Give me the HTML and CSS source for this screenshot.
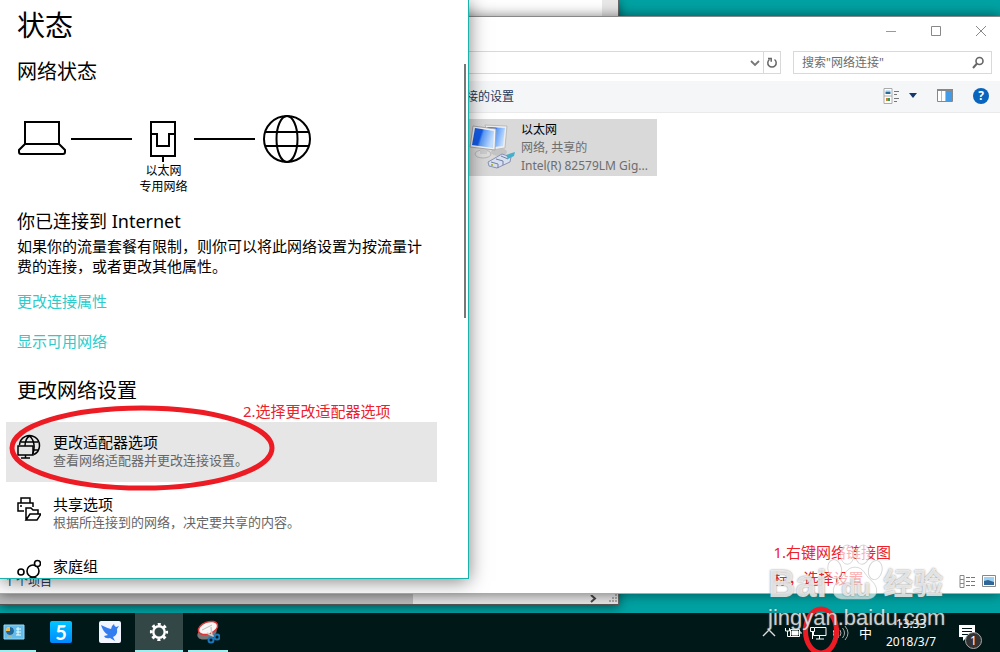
FILE: index.html
```html
<!DOCTYPE html>
<html lang="zh-CN">
<head>
<meta charset="utf-8">
<title>网络状态</title>
<meta name="viewport" content="width=device-width, initial-scale=1">
<link rel="stylesheet" href="styles.css">
</head>
<body>
<div class="desktop">
  <main class="workspace">
    <section class="window back-window" aria-label="后台窗口">
      <div class="back-body"><div class="back-track"></div></div>
      <div class="back-scroll">
        <div class="back-thumb"></div>
        <svg class="back-arrow" width="8" height="8" viewBox="0 0 8 8"><path d="M2 0l4 3.500-4 3.500" fill="none" stroke="#444" stroke-width="2"/></svg>
        <svg width="10" height="10" viewBox="0 0 10 10" fill="#aaa"><path d="M7 0h2v2H7zM4 3h2v2H4zM7 3h2v2H7zM1 6h2v2H1zM4 6h2v2H4zM7 6h2v2H7z"/></svg>
      </div>
    </section>

    <section class="window explorer" aria-label="网络连接">
      <header class="titlebar">
        <button class="plain" aria-label="最小化"><svg width="12" height="12" viewBox="0 0 12 12"><path d="M1 6.500h10" stroke="#999"/></svg></button>
        <button class="plain" aria-label="最大化"><svg width="12" height="12" viewBox="0 0 12 12"><path d="M1.500 1.500h9v9h-9z" stroke="#888" fill="none"/></svg></button>
        <button class="plain" aria-label="关闭"><svg width="12" height="12" viewBox="0 0 12 12"><path d="M1 1l10 10M11 1L1 11" stroke="#888"/></svg></button>
      </header>
      <div class="address-row">
        <div class="address">
          <button class="plain address-drop" aria-label="历史记录"><svg width="10" height="8" viewBox="0 0 10 8"><path d="M1 2l4 4 4-4" fill="none" stroke="#777" stroke-width="1.800"/></svg></button>
          <button class="plain address-refresh" aria-label="刷新"><svg width="12" height="12" viewBox="0 0 12 12"><path d="M8.500 2.500a4.200 4.200 0 1 1-5 0M2 1.500h3.200v3.200" fill="none" stroke="#666" stroke-width="1.500"/></svg></button>
        </div>
        <label class="search">
          <input type="search" placeholder='搜索"网络连接"' aria-label="搜索网络连接">
          <svg width="14" height="14" viewBox="0 0 14 14" fill="none" stroke="#666"><circle cx="8.500" cy="5" r="3.500" stroke-width="1.600"/><path d="M6 7.500L2 12" stroke-width="2"/></svg>
        </label>
      </div>
      <div class="toolbar">
        <span>接的设置</span>
        <div class="toolbar-actions">
          <button class="plain view-btn" aria-label="更改视图">
            <svg width="18" height="16" viewBox="0 0 18 16"><path d="M1 .500h8v15H1zM1 8h8" fill="#fff" stroke="#aaa"/><path d="M2.500 2.500h5v1.500h-5z" fill="#8cc4ee"/><path d="M2.500 4h5v2h-5z" fill="#246c9c"/><path d="M3 10h2v3H3z" fill="#d77b35"/><path d="M5 10h2v3H5z" fill="#3d9a50"/><path d="M11 3.500h5M11 6.500h3M11 10.500h5M11 13.500h3" stroke="#777"/></svg>
            <svg width="8" height="5" viewBox="0 0 8 5"><path d="M0 0h8L4 5z" fill="#16376b"/></svg>
          </button>
          <button class="plain" aria-label="预览窗格"><svg width="16" height="13" viewBox="0 0 16 13"><path d="M.500 .500h15v12H.500z" fill="#fff" stroke="#888"/><path d="M0 0h16v2H0z" fill="#888"/><path d="M9 2h6v10H9z" fill="#439be5"/><path d="M4.500 2v10M8.500 2v10" stroke="#bbb"/></svg></button>
          <button class="plain help" aria-label="帮助">?</button>
        </div>
      </div>
      <div class="files">
        <button class="adapter">
          <svg width="48" height="48" viewBox="0 0 48 48">
            <defs><linearGradient id="screen" x1="0" y1="0" x2="1" y2=".3"><stop offset="0" stop-color="#1c63ea"/><stop offset=".45" stop-color="#1259e8"/><stop offset=".55" stop-color="#5d9cf7"/><stop offset="1" stop-color="#c0dcff"/></linearGradient></defs>
            <ellipse cx="31" cy="28" rx="8" ry="4" fill="#c4c4c4"/>
            <path d="M17 1l22 1-2 22-13 2z" fill="#eee" stroke="#bbb"/><path d="M19 3l18 1-2 18-9 1z" fill="url(#screen)"/>
            <ellipse cx="15" cy="30" rx="8" ry="4" fill="#ddd" stroke="#b5b5b5"/><path d="M12 23h7v7h-7z" fill="#ccc"/>
            <path d="M5 2l23 3-1 21L2 23z" fill="#f3f3f3" stroke="#aaa"/><path d="M7 4l19 3-1 17L4 21z" fill="url(#screen)"/>
            <path d="M20 38l14-8 9 3-1 5-13 6-8-2z" fill="#d8dfef" stroke="#8793b2"/><path d="M38 31l9-3-1 4-6 3z" fill="#46aecb"/><path d="M23 38l7 2v4M28 35l7 2v4M33 32l7 3" fill="none" stroke="#707fa6"/><path d="M23 40h2v2h-2z" fill="#b4b938"/>
          </svg>
          <span class="adapter-text"><b>以太网</b><span>网络, 共享的</span><span>Intel(R) 82579LM Gig...</span></span>
        </button>
      </div>
      <footer class="statusbar">
        <span>1 个项目</span>
        <div class="status-views">
          <svg width="17" height="13" viewBox="0 0 17 13"><path d="M1 .500h4v12H1zM1 4.500h4M1 8.500h4" fill="none" stroke="#888"/><path d="M7 2.500h4M12 2.500h4M7 6.500h4M12 6.500h4M7 10.500h4M12 10.500h4" stroke="#777"/></svg>
          <svg width="14" height="12" viewBox="0 0 14 12"><path d="M.500 .500h13v11H.500z" fill="#fff" stroke="#888"/><path d="M2 2h10v8H2z" fill="#9dd0f3"/><path d="M2 6l4-1 6 2v3H2z" fill="#2e6697"/></svg>
        </div>
      </footer>
    </section>

    <section class="window settings" aria-label="网络设置">
      <h1>状态</h1>
      <h2>网络状态</h2>
      <div class="diagram">
        <svg width="48" height="48" viewBox="0 0 48 48" fill="none" stroke="#000" stroke-width="2"><path d="M7 7h34v22H7zM7 29l-6 6v2q0 2 2 2h42q2 0 2-2v-2l-6-6"/></svg>
        <div class="wire"></div>
        <div class="node">
          <svg width="28" height="48" viewBox="0 0 28 48" fill="none" stroke="#000" stroke-width="2"><path d="M1 7h24v34H1zM1 19h6v12h12V19h6M13 41v6"/></svg>
          <span>以太网</span><span>专用网络</span>
        </div>
        <div class="wire"></div>
        <svg width="48" height="48" viewBox="0 0 48 48" fill="none" stroke="#000" stroke-width="2"><circle cx="24" cy="24" r="23"/><ellipse cx="24" cy="24" rx="10.500" ry="23"/><path d="M2 17h44M2 31h44"/></svg>
      </div>
      <h3>你已连接到 Internet</h3>
      <p class="intro">如果你的流量套餐有限制，则你可以将此网络设置为按流量计<br>费的连接，或者更改其他属性。</p>
      <a href="#properties">更改连接属性</a>
      <a href="#networks">显示可用网络</a>
      <h2 class="change-title">更改网络设置</h2>
      <nav class="options">
        <button class="option active">
          <svg width="24" height="26" viewBox="0 0 24 26" fill="none" stroke="#000" stroke-width="1.500"><path d="M2.500 11A10 10 0 1 1 17 20.500M12.500 2C8.500 4.500 8 8 8 12M12.500 2C18 6.500 18 15 15.500 20.500M4 8h17M16 16h5"/><path d="M1 12h15v9H1zM8.500 21v3M4 24h9"/></svg>
          <span><b>更改适配器选项</b><small>查看网络适配器并更改连接设置。</small></span>
        </button>
        <button class="option">
          <svg width="24" height="26" viewBox="0 0 24 26" fill="none" stroke="#000" stroke-width="1.500"><path d="M4 7V2h9v5M7 15H1V7h15v4M9 24V12h5l2 2h5v4M9 24l4-6h11l-4 6zM3 10h2"/></svg>
          <span><b>共享选项</b><small>根据所连接到的网络，决定要共享的内容。</small></span>
        </button>
        <button class="option">
          <svg width="24" height="26" viewBox="0 0 24 26" fill="none" stroke="#000" stroke-width="1.600"><circle cx="4" cy="14" r="3"/><circle cx="16" cy="13" r="6"/><circle cx="20.500" cy="5.500" r="3" fill="#fff"/><path d="M10 22q6-5 12 0"/></svg>
          <span><b>家庭组</b></span>
        </button>
      </nav>
      <div class="scroll-thumb"></div>
    </section>
  </main>

  <footer class="taskbar">
    <div class="apps">
      <button class="plain app first running" aria-label="控制面板"><svg width="22" height="18" viewBox="0 0 22 18"><path d="M1 2h20v14H1z" fill="#63bce9" stroke="#91dcfb"/><circle cx="7" cy="8" r="4" fill="#fff"/><path d="M7 8V4a4 4 0 1 1-4 4z" fill="#21699d"/><path d="M7 4v4H3a4 4 0 0 1 4-4z" fill="#f7b93e"/><path d="M13 6h5M13 9h5M13 12h5M15 4v8" stroke="#eaffff"/><path d="M4 14h5" stroke="#e5b34c"/></svg></button>
      <button class="plain app" aria-label="5"><span class="five">5</span></button>
      <button class="plain app" aria-label="飞鸟"><svg width="22" height="22" viewBox="0 0 22 22"><rect width="22" height="22" rx="2" fill="#f0f5ff"/><path d="M2 4q6 3 10 4 0-3 3-5 0 2 2 3l3-1-2 3q1 6-4 8l2 4-5-3q-5 1-6-2l4-1Q4 11 2 4z" fill="#347df0"/></svg></button>
      <button class="plain app selected running" aria-label="设置"><svg width="20" height="20" viewBox="0 0 20 20" fill="none" stroke="#fff"><circle cx="10" cy="10" r="5.700" stroke-width="2.400"/><circle cx="10" cy="10" r="7.800" stroke-width="2.600" stroke-dasharray="3.060 3.066" stroke-dashoffset="1.500"/></svg></button>
      <button class="plain app snip running" aria-label="截图工具"><svg width="24" height="24" viewBox="0 0 24 24"><ellipse cx="11" cy="13" rx="10" ry="6" fill="#777" transform="rotate(-20 11 13)"/><ellipse cx="12" cy="8" rx="10" ry="6" fill="#f7f7f7" stroke="#dc3639" stroke-width="1.500" transform="rotate(-20 12 8)"/><path d="M6 10l10-5" stroke="#bbb"/><path d="M15 7l1 9M11 13l8 4" stroke="#ccc" stroke-width="1.500"/><g fill="none" stroke="#1c78bb" stroke-width="2"><circle cx="15" cy="20" r="2.500"/><circle cx="21" cy="17" r="2.500"/></g></svg></button>
    </div>
    <div class="tray">
      <svg width="14" height="14" viewBox="0 0 14 14"><path d="M1 10l6-6 6 6" fill="none" stroke="#ddd" stroke-width="1.400"/></svg>
      <svg class="battery" width="18" height="14" viewBox="0 0 18 14" fill="none" stroke="#fff"><path d="M6.500 3.500h9v7h-9zM1.500 2v3h4V2M3.500 5v5.500h3M16 6h1v2"/><path d="M8 5h6v4H8z" fill="#fff"/></svg>
      <svg class="lan" width="18" height="16" viewBox="0 0 18 16" fill="none" stroke="#fff"><path d="M6 2.500h11v8H4.500V7M10.500 11v3M7 14h8M1.500 2.500h4v4h-4zM3.500 7v7"/></svg>
      <svg class="volume" width="16" height="16" viewBox="0 0 16 16" fill="none" stroke="#aaa"><path d="M0 6h2l3-3v10L2 10H0z" stroke="#fff"/><path d="M7 5q2 3 0 6M9.500 3q4 5 0 10M12 1q6 7 0 14"/></svg>
      <span class="ime">中</span>
      <div class="clock"><time>13:33</time><time>2018/3/7</time></div>
      <button class="plain notice" aria-label="1 条通知"><svg width="18" height="18" viewBox="0 0 18 18"><path d="M1 1h16v12h-8l-4 4v-4H1z" fill="#fff"/><path d="M4 4.500h10M4 7.500h10M4 10.500h7" stroke="#001817"/></svg><span class="badge">1</span></button>
    </div>
  </footer>

  <svg class="ring ring-option" width="270" height="90" viewBox="0 0 270 90"><ellipse cx="135" cy="45" rx="130" ry="40" fill="none" stroke="#ed1c24" stroke-width="5"/></svg>
  <svg class="ring ring-tray" width="38" height="46" viewBox="0 0 38 46"><ellipse cx="19" cy="25" rx="15.500" ry="22" fill="none" stroke="#ed1c24" stroke-width="5"/></svg>
  <p class="note note-option">2.选择更改适配器选项</p>
  <p class="note note-tray">1.右键网络链接图<br>标，选择设置</p>
  <div class="watermark">
    <div class="brand"><span>Bai</span><span class="paw"><svg width="56" height="60" viewBox="0 0 58 60" fill="#fff" fill-opacity=".65" stroke="#bbb" stroke-opacity=".6"><ellipse cx="21" cy="12" rx="7" ry="10"/><ellipse cx="37" cy="12" rx="7" ry="10" transform="rotate(10 37 12)"/><ellipse cx="8" cy="27" rx="7" ry="10" transform="rotate(-12 8 27)"/><ellipse cx="50" cy="28" rx="7" ry="10" transform="rotate(12 50 28)"/><path d="M29 25c9 0 10 8 16 13 10 8 8 20-4 20H17C5 58 3 46 13 38c6-5 7-13 16-13z"/></svg><span class="du">du</span></span><span class="jingyan">经验</span></div>
    <div class="domain">jingyan.baidu.com</div>
  </div>
</div>
</body>
</html>
```

FILE: styles.css
```css
* { box-sizing: border-box; }
body { margin: 0; font-family: "Noto Sans", "Noto Sans CJK SC", sans-serif; font-size: 12px; color: #000; }
h1, h2, h3, p { margin: 0; font-weight: 400; }
button { font: inherit; color: inherit; border: 0; padding: 0; text-align: left; }
svg { display: block; flex: none; }
.plain { background: none; display: flex; align-items: center; justify-content: center; }

.desktop { position: relative; height: 100vh; display: flex; flex-direction: column; overflow: hidden; background: #00a2a3; }
.workspace { position: relative; flex: 1; overflow: hidden; }
.window { position: absolute; display: flex; flex-direction: column; }

.back-window { top: 0; left: 0; width: 619px; bottom: 8px; background: #f5f5f5; border-right: 1px solid #666; border-bottom: 1px solid #555; box-shadow: 0 2px 10px rgba(0,0,0,.5); }
.back-body { flex: 1; display: flex; justify-content: flex-end; background: #fff; }
.back-track { width: 16px; background: #e8e8e8; }
.back-scroll { height: 11px; display: flex; align-items: center; gap: 11px; background: #e4e4e4; }
.back-thumb { width: 413px; height: 100%; background: #bbb; }
.back-arrow { margin-left: auto; }

.explorer { top: 16px; left: 0; right: 0; bottom: 19px; background: #fff; border-top: 1px solid #888; border-bottom: 1px solid #aaa; box-shadow: 0 0 12px rgba(0,0,0,.5); }
.titlebar { height: 34px; display: flex; justify-content: flex-end; align-items: center; gap: 33px; padding: 0 13px 6px 0; }
.address-row { display: flex; gap: 12px; padding-right: 8px; height: 23px; }
.address { flex: 1; display: flex; justify-content: flex-end; border: 1px solid #d9d9d9; }
.address-drop, .address-refresh { width: 17px; }
.address-refresh { border-left: 1px solid #d9d9d9; }
.search { width: 199px; display: flex; align-items: center; padding: 0 6px 0 8px; border: 1px solid #d9d9d9; }
.search input { flex: 1; min-width: 0; border: 0; outline: 0; padding: 0; background: none; font: inherit; }
.search input::placeholder { color: #6d6d6d; opacity: 1; }
.toolbar { height: 32px; margin-top: 7px; padding: 0 11px 2px 466px; display: flex; justify-content: space-between; align-items: center; background: #f4f6f8; border-bottom: 1px solid #eaeaea; color: #1e395b; }
.toolbar-actions { display: flex; align-items: center; gap: 20px; }
.view-btn { gap: 8px; }
.help { width: 16px; height: 16px; border-radius: 50%; background: #0864bd; color: #fff; font-weight: 700; }
.files { flex: 1; padding: 6px 0 0 464px; }
.adapter { width: 193px; height: 57px; padding: 0 4px; display: flex; align-items: center; gap: 5px; background: #d9d9d9; }
.adapter-text { display: flex; flex-direction: column; line-height: 18px; color: #6d6d6d; white-space: nowrap; }
.adapter-text b { font-weight: 400; color: #000; }
.statusbar { height: 24px; padding: 0 4px 0 6px; display: flex; align-items: center; justify-content: space-between; color: #1e395b; }
.status-views { display: flex; align-items: center; gap: 6px; }

.settings { top: 0; left: 0; width: 469px; bottom: 34px; padding: 5px 31px 0 6px; overflow: hidden; background: #fff; border-right: 1px solid #19b2ac; border-bottom: 1px solid #19b2ac; box-shadow: 0 2px 18px rgba(0,0,0,.5); }
.settings > h1, .settings > h2, .settings > h3, .settings > p, .settings > a { flex: none; margin-left: 11px; }
.settings h1 { font-size: 28px; line-height: 40px; }
.settings h2 { font-size: 20px; line-height: 30px; margin-top: 12px; }
.diagram { flex: none; display: flex; align-items: flex-start; margin: 28px 0 0 12px; height: 93px; }
.wire { width: 61px; height: 2px; margin: 23px 6px 0 5px; background: #000; }
.node { width: 51px; display: flex; flex-direction: column; align-items: center; white-space: nowrap; line-height: 16px; padding-top: 1px; margin-top: -1px; }
.node + .wire { margin-right: 8px; }
.settings h3 { font-size: 18px; line-height: 26px; }
.intro { font-size: 15px; line-height: 20px; margin-top: 2px; white-space: nowrap; }
.settings a { font-size: 15px; line-height: 20px; margin-top: 15px; color: #2dcbcb; text-decoration: none; }
.settings a + a { margin-top: 20px; }
.settings .change-title { margin-top: 25px; }
.options { display: flex; flex-direction: column; gap: 2px; margin-top: 16px; }
.option { flex: none; height: 60px; display: flex; align-items: flex-start; gap: 12px; padding: 12px 11px; background: none; }
.option > span { margin-top: -1px; }
.option.active { background: #e6e6e6; }
.option b, .option small { display: block; line-height: 18px; font-weight: 400; font-size: 15px; }
.option small { font-size: 13px; color: #666; }
.scroll-thumb { position: absolute; right: 2px; top: 64px; width: 2px; height: 254px; background: #777; }

.taskbar { height: 39px; display: flex; justify-content: space-between; background: #001817; color: #fff; }
.apps { display: flex; gap: 1px; }
.app { width: 48px; border-bottom: 2px solid transparent; }
.app.first { width: 36px; padding-right: 8px; }
.app.running { border-bottom-color: #9deeee; }
.app.selected { background: #334746; }
.app.snip { width: 40px; margin-left: 4px; }
.five { width: 22px; height: 22px; border-radius: 2px; background: linear-gradient(#00c6ff, #0088ff); font: 700 20px/22px Lato, sans-serif; text-align: center; }
.tray { display: flex; align-items: center; padding-right: 24px; }
.battery { margin-left: 8px; }
.lan { margin-left: 7px; }
.volume { margin-left: 6px; }
.ime { margin-left: 10px; font-size: 13px; }
.clock { width: 56px; margin-left: 11px; display: flex; flex-direction: column; text-align: center; line-height: 18px; }
.notice { position: relative; margin-left: 19px; }
.badge { position: absolute; left: 7px; top: 8px; width: 17px; height: 17px; border: 1px solid #aaa; border-radius: 50%; background: #333; text-align: center; line-height: 15px; }

.ring, .note, .watermark { position: absolute; }
.ring-option { left: 7px; top: 403px; }
.ring-tray { right: 160px; bottom: 0; }
.note { color: #ed2129; font-size: 15px; white-space: nowrap; }
.note-option { left: 243px; top: 401px; line-height: 20px; }
.note-tray { right: 109px; bottom: 61px; line-height: 26px; }
.watermark { right: 54px; bottom: 21px; width: 178px; color: rgba(255,255,255,.75); font-family: "Liberation Sans", "Noto Sans CJK SC", sans-serif; text-shadow: 0 0 2px rgba(100,100,100,.8); white-space: nowrap; }
.brand { display: flex; align-items: flex-end; height: 63px; padding-bottom: 3px; font-size: 38px; line-height: 36px; font-weight: 700; }
.paw { position: relative; }
.du { position: absolute; left: 14px; bottom: 2px; font-size: 24px; line-height: 24px; }
.jingyan { font-size: 30px; line-height: 36px; }
.domain { font-size: 22px; line-height: 26px; }
```
